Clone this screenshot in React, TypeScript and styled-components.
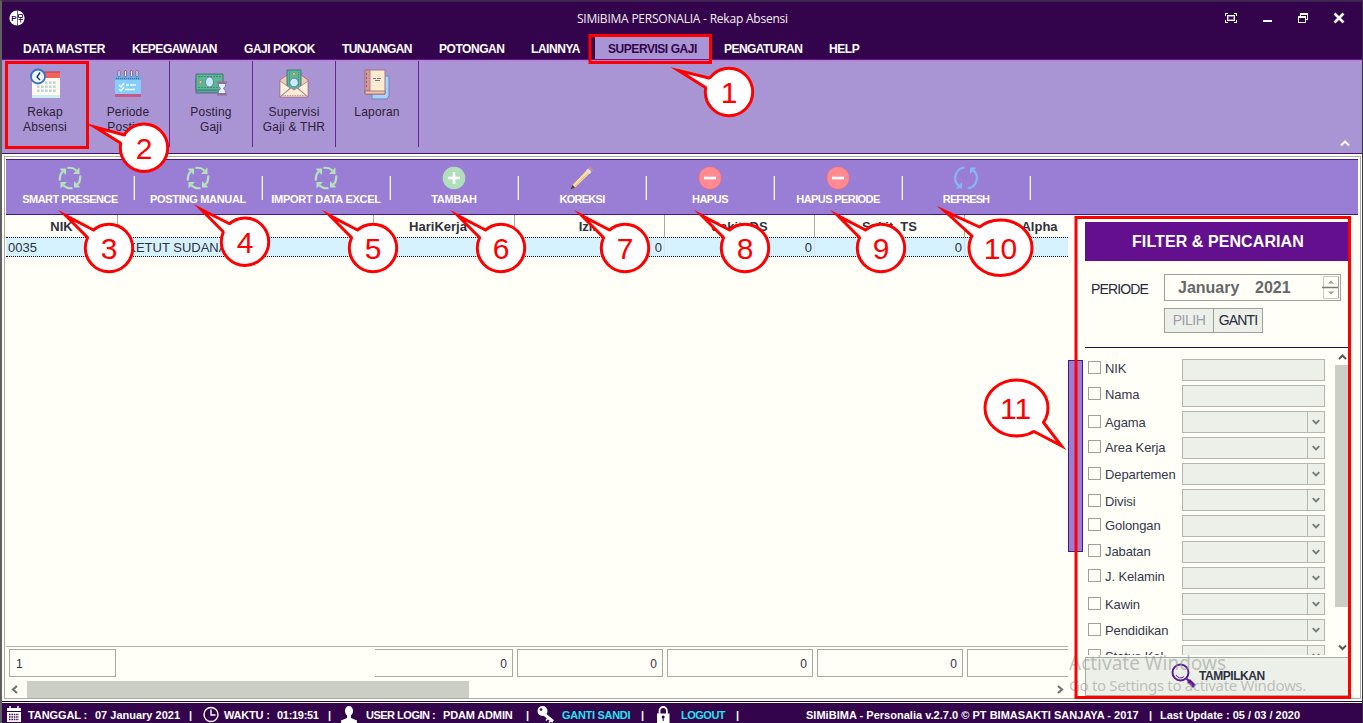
import React from "react";
import styled, { createGlobalStyle } from "styled-components";

const GlobalStyle = createGlobalStyle`
  *, *::before, *::after { box-sizing: border-box; }
  body { margin: 0; overflow: hidden; background: #fffff8; }
  #root { width: 1363px; height: 723px; }
`;

const arial = `"Liberation Sans", Arial, sans-serif`;

const Window = styled.div`
  position: relative;
  width: 1363px;
  height: 723px;
  overflow: hidden;
  display: flex;
  flex-direction: column;
  font-family: ${arial};
  white-space: nowrap;
  background: #fffff8;
  border-left: 2px solid #606062;
  border-right: 1px solid #36343c;
  border-top: 1px solid #33332f;
`;

const Header = styled.header`
  flex: none;
  height: 59px;
  background: #33044b;
  border-top: 1px solid #4a1570;
  border-bottom: 1px solid #631a86;
  display: flex;
  flex-direction: column;
`;

const TitleBar = styled.div`
  height: 32px;
  display: flex;
  align-items: center;
  padding-left: 7px;
`;

const Logo = styled.svg`
  flex: none;
  width: 16px;
  height: 16px;
`;

const Title = styled.div`
  flex: none;
  width: 230px;
  margin-left: 552px;
  font: 12px "Open Sans", sans-serif;
  letter-spacing: -0.22px;
  color: #f4eff6;
`;

const WindowControls = styled.div`
  flex: none;
  display: flex;
  width: 140px;
  margin-left: 414px;
`;

const ControlIcon = styled.svg`
  flex: none;
  width: 36px;
  height: 16px;
  fill: none;
  stroke: #fff;
`;

const Menu = styled.nav`
  display: flex;
  height: 25px;
  padding-left: 21px;
`;

const MenuItem = styled.div<{ $w: number; $ls?: number; $active?: boolean }>`
  flex: none;
  width: ${(p) => p.$w}px;
  height: 25px;
  margin-left: ${(p) => (p.$active ? -13 : 0)}px;
  margin-right: ${(p) => (p.$active ? 14 : 0)}px;
  padding-left: ${(p) => (p.$active ? 13 : 0)}px;
  background: ${(p) => (p.$active ? "#a995d3" : "none")};
  color: ${(p) => (p.$active ? "#33044b" : "#fff")};
  font-size: 12px;
  font-weight: bold;
  line-height: 31px;
  letter-spacing: ${(p) => p.$ls ?? -0.45}px;
`;

const Ribbon = styled.div`
  flex: none;
  position: relative;
  display: flex;
  height: 94px;
  background: #a995d3;
  border-top: 1px solid #bd78dc;
  border-bottom: 1px solid #4c1273;
`;

const RibbonButton = styled.div<{ $first?: boolean }>`
  width: ${(p) => (p.$first ? 85 : 83)}px;
  height: 86px;
  padding: 7px 0 0 ${(p) => (p.$first ? 2 : 0)}px;
  border-right: 1px solid ${(p) => (p.$first ? "transparent" : "#6a2496")};
  display: flex;
  flex-direction: column;
  align-items: center;
  font-size: 12px;
  line-height: 15px;
  letter-spacing: 0.18px;
  text-align: center;
  color: #2c2038;
  svg { width: 32px; height: 32px; margin-bottom: 5px; flex: none; }
`;

const CollapseIcon = styled.svg`
  width: 10px;
  height: 7px;
  margin: 79px 12px 0 auto;
  fill: none;
  stroke: #fff;
  stroke-width: 2;
`;

const Frame = styled.main`
  flex: none;
  display: flex;
  flex-direction: column;
  width: 1357px;
  height: 543px;
  margin: 2px 0 0 2px;
  border: 1px solid #a9aca3;
  padding: 2px 1px 0 1px;
`;

const ToolBar = styled.div`
  display: flex;
  flex: none;
  height: 56px;
  width: 1352px;
  background: #9a7dd4;
  border-top: 1px solid #4b148f;
  border-bottom: 1px solid #4b148f;
`;

const Tool = styled.div<{ $ls: number }>`
  width: 128px;
  position: relative;
  display: flex;
  flex-direction: column;
  align-items: center;
  padding-top: 6px;
  color: #fff;
  font-size: 11px;
  line-height: 13px;
  font-weight: bold;
  letter-spacing: ${(p) => p.$ls}px;
  svg { width: 24px; height: 24px; margin-bottom: 3px; }
  &::after {
    content: "";
    position: absolute;
    right: -1px;
    top: 16px;
    width: 2px;
    height: 24px;
    background: #fbf8ef;
    border-left: 1px solid #b7a6dd;
  }
`;

const Body = styled.div`
  display: flex;
  height: 483px;
`;

const GridArea = styled.section`
  width: 1062px;
  display: flex;
  flex-direction: column;
  overflow: hidden;
`;

const GridRow = styled.div<{ $head?: boolean }>`
  display: flex;
  width: 1110px;
  height: ${(p) => (p.$head ? 22 : 20)}px;
  font-size: 13px;
  font-weight: ${(p) => (p.$head ? "bold" : "normal")};
  color: #2f3040;
  line-height: ${(p) => (p.$head ? 23 : 19)}px;
  background: ${(p) => (p.$head ? "transparent" : "#d6f2ff")};
  border-top: ${(p) => (p.$head ? "0" : "1px dotted #111")};
  border-bottom: ${(p) => (p.$head ? "0" : "1px dotted #111")};
`;

const Cell = styled.div<{ $w: number; $align?: string; $head?: boolean; $padR?: number }>`
  flex: none;
  width: ${(p) => p.$w}px;
  text-align: ${(p) => p.$align || "left"};
  padding: 0 ${(p) => p.$padR ?? 2}px 0 2px;
  border-right: 1px solid ${(p) => (p.$head ? "#aaa9a2" : "#d3e4e6")};
`;

const Rows = styled.div`
  flex: 1;
`;

const Totals = styled.div`
  display: flex;
  flex: none;
  height: 33px;
  width: 1110px;
  border-top: 1px solid #b2b5ac;
  padding: 2px 0 0 3px;
`;

const Total = styled.div<{ $w: number; $gap: number; $open?: boolean; $left?: boolean }>`
  flex: none;
  width: ${(p) => p.$w}px;
  height: 28px;
  margin-right: ${(p) => p.$gap}px;
  border: 1px solid #a6aaa1;
  border-left-width: ${(p) => (p.$open ? 0 : 1)}px;
  padding: 0 5px 0 6px;
  font-size: 12px;
  line-height: 28px;
  color: #2f3040;
  text-align: ${(p) => (p.$left ? "left" : "right")};
`;

const HScroll = styled.div`
  display: flex;
  flex: none;
  align-items: center;
  height: 18px;
  margin: 1px 0 0;
  svg { flex: none; width: 21px; height: 17px; fill: none; stroke: #6e716c; stroke-width: 2.2; }
`;

const HThumb = styled.div`
  flex: none;
  width: 442px;
  height: 17px;
  margin-right: 582px;
  background: #cbcec5;
`;

const Splitter = styled.div`
  width: 15px;
  height: 192px;
  margin-top: 145px;
  background: #9a7dd4;
  border: 1px solid #4b1482;
`;

const FilterPanel = styled.aside`
  width: 264px;
  margin: 7px 0 0 2px;
  display: flex;
  flex-direction: column;
`;

const FilterTitle = styled.div`
  height: 39px;
  background: #640f8e;
  color: #fff;
  font-size: 16px;
  font-weight: bold;
  line-height: 39px;
  letter-spacing: 0.08px;
  padding-left: 47px;
`;

const PeriodRow = styled.div`
  display: flex;
  height: 27px;
  margin-top: 13px;
  padding-left: 6px;
  font-size: 14px;
  line-height: 30px;
  letter-spacing: -0.85px;
  color: #262a3c;
`;

const PeriodField = styled.div`
  display: flex;
  width: 177px;
  height: 27px;
  margin-left: auto;
  margin-right: 8px;
  border: 1px solid #9fa29a;
  padding-left: 13px;
  font-size: 16px;
  font-weight: bold;
  line-height: 26px;
  letter-spacing: 0;
  color: #66686a;
`;

const Month = styled.span`
  width: 77px;
`;

const Spinner = styled.svg`
  width: 18px;
  height: 25px;
  margin-left: auto;
`;

const PeriodButtons = styled.div`
  display: flex;
  margin: 7px 0 0 79px;
`;

const SmallButton = styled.div<{ $off?: boolean }>`
  width: 50px;
  height: 25px;
  margin-right: -1px;
  border: 1px solid #9fa29a;
  background: #edf0e9;
  color: ${(p) => (p.$off ? "#9d9baf" : "#262a3c")};
  text-align: center;
  font-size: 14px;
  line-height: 23px;
  letter-spacing: ${(p) => (p.$off ? -0.5 : -0.9)}px;
`;

const Fields = styled.div`
  flex: none;
  display: flex;
  height: 308px;
  margin-top: 14px;
  border-top: 1px solid #2a0b45;
  overflow: hidden;
`;

const FieldList = styled.div`
  width: 250px;
  padding: 11px 0 0 3px;
`;

const Field = styled.div`
  display: flex;
  height: 26px;
`;

const Check = styled.div<{ $dy: number }>`
  display: flex;
  width: 94px;
  height: 13px;
  margin-top: ${(p) => p.$dy}px;
  font-size: 13px;
  line-height: 15px;
  letter-spacing: -0.1px;
  color: #35384a;
  &::before {
    content: "";
    flex: none;
    width: 13px;
    height: 13px;
    margin-right: 4px;
    border: 1px solid #9fa29a;
  }
`;

const Input = styled.div`
  display: flex;
  justify-content: flex-end;
  width: 143px;
  height: 22px;
  background: #edf0e8;
  border: 1px solid #b3b7ae;
  svg {
    width: 17px;
    height: 20px;
    border-left: 1px solid #b3b7ae;
    fill: none;
    stroke: #777a76;
    stroke-width: 2;
  }
`;

const VScroll = styled.div`
  width: 14px;
  display: flex;
  flex-direction: column;
  justify-content: space-between;
  svg { width: 14px; height: 17px; fill: none; stroke: #555852; stroke-width: 2; }
`;

const VThumb = styled.div`
  height: 242px;
  margin-bottom: auto;
  background: #cbcec5;
`;

const ShowButton = styled.div`
  flex: none;
  display: flex;
  align-items: center;
  height: 39px;
  margin-top: 2px;
  padding: 0 0 2px 85px;
  border: 1px solid #a9aca3;
  border-right: 0;
  background: #edf0e8;
  color: #2d3040;
  font-size: 12px;
  font-weight: bold;
  letter-spacing: -0.45px;
  svg { width: 25px; height: 25px; margin-right: 3px; }
`;

const StatusBar = styled.footer`
  flex: none;
  display: flex;
  height: 20px;
  margin-top: auto;
  background: #33044b;
  box-shadow: 0 -1px #fff, 0 -2px #24083a;
  padding-left: 4px;
  color: #fff;
  font-size: 11px;
  font-weight: bold;
  line-height: 25px;
`;

const StatusItem = styled.div<{ $w: number; $ls?: number; $link?: boolean }>`
  flex: none;
  width: ${(p) => p.$w}px;
  letter-spacing: ${(p) => p.$ls ?? 0}px;
  color: ${(p) => (p.$link ? "#21e5f2" : "#fff")};
  svg { display: block; width: 17px; height: 18px; margin-top: 3px; }
`;

const Watermark = styled.div`
  position: absolute;
  left: 1067px;
  top: 649px;
  color: rgba(150, 153, 150, 0.58);
  font-family: "Noto Sans", sans-serif;
  font-size: 19px;
  line-height: 26px;
`;

const WatermarkNote = styled.div`
  font-size: 15px;
  line-height: 19px;
  letter-spacing: -0.33px;
`;

const Annotations = styled.svg`
  position: absolute;
  left: -2px;
  top: -1px;
  width: 1363px;
  height: 723px;
  pointer-events: none;
`;

/* ---------- ribbon icons (32 x 32) ---------- */

const RecapIcon = () => (
  <svg viewBox="0 0 32 32">
    <path d="M3 9h28v21H3z" fill="#fff8ee" />
    <path d="M3 27h28v3H3z" fill="#c9f0ef" />
    <path d="M13 4h18v6H13z" fill="#f0625c" />
    <path d="M13 4h18" stroke="#b83a4a" />
    <g fill="#b9d3da">
      {[14, 18, 22].map((y) =>
        [8, 12, 16, 20, 24].map((x) => (y === 14 && x < 16 ? null : <rect key={`${x}-${y}`} x={x} y={y - 0.5} width="2.6" height="2.4" />))
      )}
    </g>
    <circle cx="9" cy="8.500" r="7" fill="#eaf7ff" stroke="#3b6fc0" strokeWidth="1.800" />
    <path d="M11 4.500 8 9l3 3" fill="none" stroke="#28345c" strokeWidth="1.400" />
  </svg>
);

const PeriodIcon = () => (
  <svg viewBox="0 0 32 32">
    <path d="M3 7h26v20H3z" fill="#86cdfa" />
    <path d="M3 7h26v5H3z" fill="#6aaee6" />
    <path d="M4 10.500h24" stroke="#4a6fa8" strokeWidth="1.500" strokeDasharray="1 1" />
    <path d="M3 26h26v3H3z" fill="#c65a83" />
    <g fill="#fff" stroke="#76507d" strokeWidth="0.800">
      {[6, 12.5, 18.5, 24].map((x) => <rect key={x} x={x} y="2.500" width="2" height="6" rx="1" />)}
    </g>
    <path d="m7 17 2 2 3-4m-5 6 2 2 3-4M14 17h3m1 0h6M13 21.500h10" fill="none" stroke="#effbff" strokeWidth="1.400" />
  </svg>
);

const PostingIcon = () => (
  <svg viewBox="0 0 32 32">
    <path d="M1 10v15h26V10z" fill="#4fa98a" stroke="#4c6a87" />
    <path d="M1 6h27v16H1z" fill="#59b98f" stroke="#4c6a87" />
    <path d="M3 8.500h23M3 19.500h20" stroke="#3e8d80" strokeDasharray="2 1" />
    <ellipse cx="14.500" cy="14" rx="4" ry="5" fill="#c5ecff" stroke="#6c7fa9" />
    <circle cx="5.500" cy="14" r="1.500" fill="#f5c3a5" stroke="#8f6c6c" strokeWidth=".6" />
    <path d="M22 14.500h10M22 26.500h10" stroke="#9c6c96" strokeWidth="2" />
    <path d="M23 15.500h8q0 3-2.500 5 2.500 2 2.500 5h-8q0-3 2.500-5-2.500-2-2.500-5z" fill="#dff4ff" stroke="#8470a6" />
  </svg>
);

const EnvelopeIcon = () => (
  <svg viewBox="0 0 32 32">
    <path d="M2 12 16 2l14 10v17H2z" fill="#f4cdb1" stroke="#a27891" />
    <path d="M9 2h14v20H9z" fill="#59b98f" stroke="#48717f" />
    <path d="M11.500 3.500v15m9-15v15" stroke="#3e8d80" strokeDasharray="1.500 1" />
    <circle cx="16" cy="6" r="1.500" fill="#f5c3a5" stroke="#8f6c6c" strokeWidth=".6" />
    <path d="m2 13 10 7-10 9zM30 13l-10 7 10 9z" fill="#fff1dd" stroke="#a27891" strokeWidth=".8" />
    <path d="m2 29 11-9 3 2 3-2 11 9z" fill="#fdebd4" stroke="#a27891" strokeWidth=".8" />
    <circle cx="16" cy="14.500" r="4.300" fill="#c5ecff" stroke="#6c7fa9" />
    <path d="M4 27.500h24" stroke="#c896a3" strokeDasharray="1.500 1" />
  </svg>
);

const ReportIcon = () => (
  <svg viewBox="0 0 32 32">
    <path d="M13 8h15v20l-2 3H11v-4z" fill="#a8d2f8" stroke="#6f83bd" />
    <path d="M4 2h20v24H4z" fill="#fcebd0" stroke="#a2758d" />
    <path d="M4 2h5v21H4z" fill="#d79a92" stroke="#a2758d" strokeWidth=".8" />
    <path d="M4 23h20v3H4z" fill="#f0c8a8" stroke="#945f78" strokeWidth=".8" />
    <path d="M5.500 5v15" stroke="#8b5d73" strokeDasharray="2 2" />
    <path d="M12 10.500h3m1 0h4M14 12.500h5" stroke="#78718c" />
  </svg>
);

/* ---------- toolbar icons (24 x 24) ---------- */

const CycleIcon = () => (
  <svg viewBox="0 0 24 24" fill="none" stroke="#b5e3bd" strokeWidth="2.200">
    {[0, 90, 180, 270].map((a) => (
      <g key={a} transform={`rotate(${a} 12 12)`}>
        <path d="M9.500 2A10.300 10.300 0 0 1 18.500 4.500" />
        <path d="M21.500 1.500v6.500H15z" fill="#b5e3bd" stroke="none" />
      </g>
    ))}
  </svg>
);

const PlusIcon = () => (
  <svg viewBox="0 0 24 24">
    <circle cx="12" cy="12" r="11.300" fill="#b2dfbb" />
    <path d="M12 6v12M6 12h12" stroke="#fff" strokeWidth="2.600" />
  </svg>
);

const MinusIcon = () => (
  <svg viewBox="0 0 24 24">
    <circle cx="12" cy="12" r="11.300" fill="#ff8b91" stroke="#e3677d" strokeWidth=".6" />
    <path d="M6 12h12" stroke="#fff" strokeWidth="2.600" />
  </svg>
);

const PencilIcon = () => (
  <svg viewBox="0 0 24 24">
    <path d="m2.500 19 15-15.500 3 3L5 21.500z" fill="#fbe19b" />
    <path d="m4.500 20.500 15-15" stroke="#eebf6c" />
    <path d="m18 3 2-2.200 3.200 3.200-2.200 2z" fill="#e8837f" />
    <path d="m16 4.500 2-2 3.500 3.500-2 2z" fill="#cfe9f7" />
    <path d="m2.500 19 2.500 2.500L.5 23.500z" fill="#4a4034" />
  </svg>
);

const RefreshIcon = () => (
  <svg viewBox="0 0 24 24" fill="none" stroke="#86b6f8" strokeWidth="2.200">
    {[0, 180].map((a) => (
      <g key={a} transform={`rotate(${a} 12 12)`}>
        <path d="M10.500 1.500A10.500 10.500 0 0 0 5 20" />
        <path d="M8 16v6.500H1.500z" fill="#86b6f8" stroke="none" />
      </g>
    ))}
  </svg>
);

const menu = [
  { label: "DATA MASTER", w: 109, ls: -0.27 },
  { label: "KEPEGAWAIAN", w: 112 },
  { label: "GAJI POKOK", w: 98 },
  { label: "TUNJANGAN", w: 97, ls: -0.6 },
  { label: "POTONGAN", w: 92 },
  { label: "LAINNYA", w: 77 },
  { label: "SUPERVISI GAJI", w: 115, active: true },
  { label: "PENGATURAN", w: 105, ls: -0.55 },
  { label: "HELP", w: 60 },
];

const ribbon = [
  { lines: ["Rekap", "Absensi"], Icon: RecapIcon },
  { lines: ["Periode", "Posting"], Icon: PeriodIcon },
  { lines: ["Posting", "Gaji"], Icon: PostingIcon },
  { lines: ["Supervisi", "Gaji & THR"], Icon: EnvelopeIcon },
  { lines: ["Laporan"], Icon: ReportIcon },
];

const tools = [
  { label: "SMART PRESENCE", ls: -0.5, Icon: CycleIcon },
  { label: "POSTING MANUAL", ls: -0.3, Icon: CycleIcon },
  { label: "IMPORT DATA EXCEL", ls: -0.28, Icon: CycleIcon },
  { label: "TAMBAH", ls: -0.2, Icon: PlusIcon },
  { label: "KOREKSI", ls: -0.7, Icon: PencilIcon },
  { label: "HAPUS", ls: -0.5, Icon: MinusIcon },
  { label: "HAPUS PERIODE", ls: -0.6, Icon: MinusIcon },
  { label: "REFRESH", ls: -0.9, Icon: RefreshIcon },
];

const columns = [
  { title: "NIK", w: 112, value: "0035", align: "left" },
  { title: "", w: 256, value: "I KETUT SUDANA", align: "left" },
  { title: "HariKerja", w: 141, value: "0", align: "right", pad: 14 },
  { title: "Izin", w: 150, value: "0", align: "right" },
  { title: "Sakit_DS", w: 150, value: "0", align: "right" },
  { title: "Sakit_TS", w: 150, value: "0", align: "right" },
  { title: "Alpha", w: 150, value: "", align: "right" },
];

const fields = [
  { label: "NIK", dy: 2 },
  { label: "Nama", dy: 2 },
  { label: "Agama", dy: 4, select: true },
  { label: "Area Kerja", dy: 3, select: true },
  { label: "Departemen", dy: 4, select: true },
  { label: "Divisi", dy: 5, select: true },
  { label: "Golongan", dy: 3, select: true },
  { label: "Jabatan", dy: 3, select: true },
  { label: "J. Kelamin", dy: 2, select: true },
  { label: "Kawin", dy: 4, select: true },
  { label: "Pendidikan", dy: 4, select: true },
  { label: "Status Kel.", dy: 4, select: true },
];

type Point = [number, number];
type CalloutProps = { n: number; c: Point; tip: Point; a: Point; b: Point; rx?: number; ry?: number };

const near = (n: number, cx: number): CalloutProps => ({
  n, c: [cx, 248], tip: [cx - 49.5, 211], a: [cx - 15.5, 230], b: [cx - 21.5, 237.5],
});

const callouts: CalloutProps[] = [
  { n: 1, c: [729, 92], tip: [671.5, 67.5], a: [709, 78], b: [705.5, 87.5] },
  { n: 2, c: [144, 147.7], tip: [88, 124], a: [124.5, 135], b: [120.5, 143] },
  near(3, 109),
  { n: 4, c: [245, 241.7], tip: [195, 205], a: [229, 223.5], b: [223, 231.5] },
  near(5, 373),
  near(6, 501),
  near(7, 625),
  near(8, 745),
  near(9, 881),
  { n: 10, c: [1000.5, 247.7], tip: [937, 206], a: [979.5, 227], b: [972, 236], rx: 31.5, ry: 27.7 },
  { n: 11, c: [1016.5, 408], tip: [1067, 450.5], a: [1043.5, 422.5], b: [1034, 431.5], rx: 31.5, ry: 28 },
];

const Callout = ({ n, c, tip, a, b, rx = 23.7, ry = 23.7 }: CalloutProps) => {
  const mid = [(a[0] + b[0]) / 2, (a[1] + b[1]) / 2];
  const t = [tip[0] + (mid[0] - tip[0]) * 0.2, tip[1] + (mid[1] - tip[1]) * 0.2];
  return (
    <g>
      <ellipse cx={c[0]} cy={c[1]} rx={rx} ry={ry} fill="#fff" stroke="#f00" strokeWidth="3" />
      <path d={`M${a}L${t}L${b}L${c}Z`} fill="#fff" />
      <path d={`M${a}L${t}L${b}`} fill="none" stroke="#f00" strokeWidth="3" strokeMiterlimit="20" strokeLinecap="round" />
      <text x={n === 11 ? c[0] - 1 : c[0]} y={c[1] + 11} textAnchor="middle" fontSize="30" fill="#f00">{n}</text>
    </g>
  );
};

export default function App() {
  return (
    <Window>
      <GlobalStyle />
      <Header>
        <TitleBar>
          <Logo viewBox="0 0 16 16">
            <circle cx="8" cy="8" r="7.600" fill="#fff" />
            <path d="M8.500 0v16" stroke="#54256e" strokeWidth=".8" />
            <text x="2.200" y="11" fontSize="8" fontWeight="bold" fill="#3b0a55">P</text>
            <path d="M9.500 4.500h4v3h-4zM9.500 9.500h4.500M11.700 7.500v5" fill="none" stroke="#3b0a55" strokeWidth=".9" />
          </Logo>
          <Title>SIMiBIMA PERSONALIA - Rekap Absensi</Title>
          <WindowControls>
            <ControlIcon viewBox="0 0 36 16" shapeRendering="crispEdges">
              <path d="M4.500 6V3.500H7M13 3.500h2.500V6M4.500 10v2.500H7m6 0h2.500V10" />
              <rect x="6.500" y="5.500" width="7" height="5" stroke="#fff" fill="#8d73a5" />
              <path d="M8 8h4" stroke="#33044b" strokeWidth="2" />
            </ControlIcon>
            <ControlIcon viewBox="0 0 36 16" shapeRendering="crispEdges"><path d="M6 11h9" strokeWidth="2" /></ControlIcon>
            <ControlIcon viewBox="0 0 36 16" shapeRendering="crispEdges">
              <path d="M7.500 6V3.500h7v6H13M7 4h8M5 7h8" />
              <rect x="5.500" y="6.500" width="7" height="6" />
            </ControlIcon>
            <ControlIcon viewBox="0 0 36 16"><path d="m5.500 3.500 9 9m0-9-9 9" strokeWidth="2.600" /></ControlIcon>
          </WindowControls>
        </TitleBar>
        <Menu>
          {menu.map((m) => (
            <MenuItem key={m.label} $w={m.w} $ls={m.ls} $active={m.active}>{m.label}</MenuItem>
          ))}
        </Menu>
      </Header>

      <Ribbon>
        {ribbon.map(({ lines, Icon }, i) => (
          <RibbonButton key={lines[0] + i} $first={i === 0}>
            <Icon />
            {lines.map((l) => <span key={l}>{l}</span>)}
          </RibbonButton>
        ))}
        <CollapseIcon viewBox="0 0 10 7"><path d="m1 5.500 4-4 4 4" /></CollapseIcon>
      </Ribbon>

      <Frame>
        <ToolBar>
          {tools.map(({ label, ls, Icon }) => (
            <Tool key={label} $ls={ls}><Icon />{label}</Tool>
          ))}
        </ToolBar>
        <Body>
          <GridArea>
            <GridRow $head>
              {columns.map((c, i) => (
                <Cell key={i} $w={c.w} $head $align="center" $padR={c.pad}>{c.title}</Cell>
              ))}
            </GridRow>
            <GridRow>
              {columns.map((c, i) => <Cell key={i} $w={c.w} $align={c.align}>{c.value}</Cell>)}
            </GridRow>
            <Rows />
            <Totals>
              <Total $w={107} $gap={259} $left>1</Total>
              <Total $w={138} $gap={4} $open>0</Total>
              <Total $w={146} $gap={4}>0</Total>
              <Total $w={146} $gap={4}>0</Total>
              <Total $w={146} $gap={4}>0</Total>
              <Total $w={146} $gap={4} />
            </Totals>
            <HScroll>
              <svg viewBox="0 0 21 17"><path d="m11 5-4 3.500 4 3.500" /></svg>
              <HThumb />
              <svg viewBox="0 0 21 17"><path d="m7 5 4 3.500-4 3.500" /></svg>
            </HScroll>
          </GridArea>
          <Splitter />
          <FilterPanel>
            <FilterTitle>FILTER &amp; PENCARIAN</FilterTitle>
            <PeriodRow>
              PERIODE
              <PeriodField>
                <Month>January</Month>2021
                <Spinner viewBox="0 0 18 25">
                  <path d="M1.500 12V1.500h15V12M1.500 13v10.500h15V13" fill="none" stroke="#c6c8c0" />
                  <path d="M0 12.500h17" stroke="#777a76" strokeWidth="1.500" />
                  <path d="M16.500 2v21" stroke="#9fa29a" />
                  <path d="m9 5.500 3 3H6zM9 19.500l3-3H6z" fill="#9a9d96" />
                </Spinner>
              </PeriodField>
            </PeriodRow>
            <PeriodButtons>
              <SmallButton $off>PILIH</SmallButton>
              <SmallButton>GANTI</SmallButton>
            </PeriodButtons>
            <Fields>
              <FieldList>
                {fields.map((f) => (
                  <Field key={f.label}>
                    <Check $dy={f.dy}>{f.label}</Check>
                    <Input>
                      {f.select && <svg viewBox="0 0 17 20"><path d="m5 8 3.500 3.500L12 8" /></svg>}
                    </Input>
                  </Field>
                ))}
              </FieldList>
              <VScroll>
                <svg viewBox="0 0 14 17"><path d="m4 11 3.500-3.500L11 11" /></svg>
                <VThumb />
                <svg viewBox="0 0 14 17"><path d="m4 7.500 3.500 3.500L11 7.500" /></svg>
              </VScroll>
            </Fields>
            <ShowButton>
              <svg viewBox="0 0 25 25" fill="none" stroke="#5b1a9a">
                <circle cx="9.500" cy="9.500" r="8" strokeWidth="2" />
                <path d="M5 12a5 5 0 0 0 8 1.500" strokeWidth="1" />
                <path d="m15.500 15.500 3 3" strokeWidth="2" />
                <path d="m17.500 17.500 6 6" strokeWidth="4" />
              </svg>
              TAMPILKAN
            </ShowButton>
          </FilterPanel>
        </Body>
      </Frame>

      <StatusBar>
        <StatusItem $w={22}>
          <svg viewBox="0 0 17 18">
            <path d="M1 2h14v3H1zM1 6h14v10H1z" fill="#fff" />
            <path d="M3 8.500h10M3 11h10M3 13.500h10" stroke="#33044b" strokeWidth="1.300" strokeDasharray="1.500 .9" />
            <path d="M4 0v3m8-3v3" stroke="#fff" strokeWidth="1.500" />
          </svg>
        </StatusItem>
        <StatusItem $w={67} $ls={-0.1}>TANGGAL :</StatusItem>
        <StatusItem $w={94}>07 January 2021</StatusItem>
        <StatusItem $w={14}>|</StatusItem>
        <StatusItem $w={21}>
          <svg viewBox="0 0 17 18" fill="none" stroke="#fff" strokeWidth="1.400">
            <circle cx="8" cy="8.500" r="7" /><path d="M8 3.500V9h4.500" />
          </svg>
        </StatusItem>
        <StatusItem $w={53} $ls={-0.2}>WAKTU :</StatusItem>
        <StatusItem $w={51} $ls={-0.3}>01:19:51</StatusItem>
        <StatusItem $w={13}>|</StatusItem>
        <StatusItem $w={25}>
          <svg viewBox="0 0 17 18" fill="#fff"><ellipse cx="8" cy="5" rx="4" ry="5" /><path d="M6 8h4v4l6 2.500V17H0v-2.500L6 12z" /></svg>
        </StatusItem>
        <StatusItem $w={77} $ls={-0.5}>USER LOGIN :</StatusItem>
        <StatusItem $w={83} $ls={-0.15}>PDAM ADMIN</StatusItem>
        <StatusItem $w={11}>|</StatusItem>
        <StatusItem $w={25}>
          <svg viewBox="0 0 17 18" fill="#fff">
            <path d="m7 8 9 7.500" stroke="#fff" strokeWidth="3" /><path d="m11 12-2 2.500M14 14l-2 2.500" stroke="#fff" strokeWidth="1.500" />
            <circle cx="5.500" cy="5" r="5" /><circle cx="4" cy="3.500" r="1.300" fill="#33044b" />
          </svg>
        </StatusItem>
        <StatusItem $w={79} $ls={-0.3} $link>GANTI SANDI</StatusItem>
        <StatusItem $w={15}>|</StatusItem>
        <StatusItem $w={25}>
          <svg viewBox="0 0 17 18">
            <path d="M3.500 8V5a3.700 4 0 0 1 7.400 0v3" fill="none" stroke="#fff" strokeWidth="1.800" />
            <path d="M1 7.500h12.500V17H1z" fill="#fff" />
            <circle cx="7.200" cy="11" r="1.500" fill="#33044b" /><path d="M7.200 11v4" stroke="#33044b" />
          </svg>
        </StatusItem>
        <StatusItem $w={55} $ls={-0.5} $link>LOGOUT</StatusItem>
        <StatusItem $w={70}>|</StatusItem>
        <StatusItem $w={343} $ls={0.02}>SIMiBIMA - Personalia v.2.7.0 © PT BIMASAKTI SANJAYA - 2017</StatusItem>
        <StatusItem $w={11}>|</StatusItem>
        <StatusItem $w={150}>Last Update : 05 / 03 / 2020</StatusItem>
      </StatusBar>

      <Watermark>
        Activate Windows
        <WatermarkNote>Go to Settings to activate Windows.</WatermarkNote>
      </Watermark>

      <Annotations viewBox="0 0 1363 723">
        <g fill="none" stroke="#f00" strokeWidth="3">
          <rect x="590" y="35.500" width="120.500" height="27" />
          <rect x="6.500" y="62.500" width="81" height="85" />
          <rect x="1076" y="217.500" width="273.500" height="480" />
        </g>
        {callouts.map((c) => <Callout key={c.n} {...c} />)}
      </Annotations>
    </Window>
  );
}
